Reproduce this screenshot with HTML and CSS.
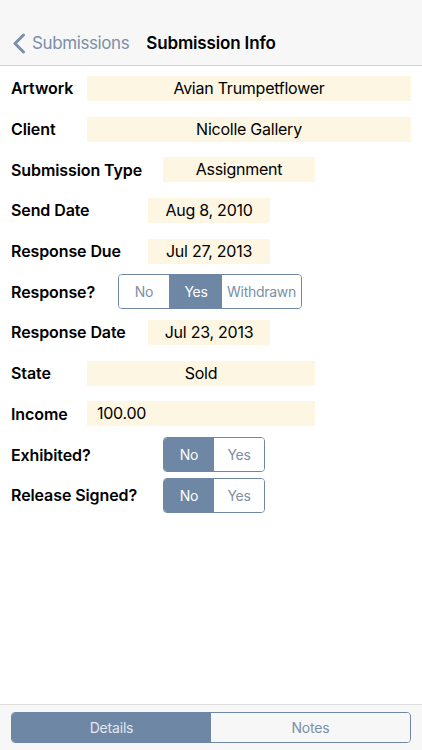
FILE: index.html
```html
<!DOCTYPE html>
<html>
<head>
<meta charset="utf-8">
<link rel="stylesheet" href="styles.css">
</head>
<body>
<div class="app">
  <header class="nav">
    <div class="back">
      <svg class="chev" width="14" height="21" viewBox="0 0 14 21"><path d="M11.5 2 L3 10.5 L11.5 19" fill="none" stroke="#7b8fa9" stroke-width="3" stroke-linecap="round" stroke-linejoin="round"/></svg>
      <span class="back-text">Submissions</span>
    </div>
    <div class="title">Submission Info</div>
  </header>
  <main class="form">
    <div class="row"><span class="label w76">Artwork</span><span class="field f-wide">Avian Trumpetflower</span></div>
    <div class="row"><span class="label w76">Client</span><span class="field f-wide">Nicolle Gallery</span></div>
    <div class="row"><span class="label w152">Submission Type</span><span class="field f-type">Assignment</span></div>
    <div class="row"><span class="label w137">Send Date</span><span class="field f-date">Aug 8, 2010</span></div>
    <div class="row"><span class="label w137">Response Due</span><span class="field f-date">Jul 27, 2013</span></div>
    <div class="row"><span class="label w107">Response?</span>
      <div class="seg seg-resp">
        <span class="opt o-no">No</span><span class="opt o-yes on">Yes</span><span class="opt o-wd">Withdrawn</span>
      </div>
    </div>
    <div class="row"><span class="label w137">Response Date</span><span class="field f-date">Jul 23, 2013</span></div>
    <div class="row"><span class="label w76">State</span><span class="field f-mid">Sold</span></div>
    <div class="row"><span class="label w76">Income</span><span class="field f-mid left">100.00</span></div>
    <div class="row"><span class="label w152">Exhibited?</span>
      <div class="seg seg-yn"><span class="opt on">No</span><span class="opt">Yes</span></div>
    </div>
    <div class="row"><span class="label w152">Release Signed?</span>
      <div class="seg seg-yn"><span class="opt on">No</span><span class="opt">Yes</span></div>
    </div>
  </main>
  <footer class="bottom">
    <div class="tabs"><span class="tab on">Details</span><span class="tab">Notes</span></div>
  </footer>
</div>
</body>
</html>
```
FILE: styles.css
```css
html, body { margin: 0; padding: 0; }
body { background: #fff; font-family: Inter, "Liberation Sans", sans-serif; }
.app { width: 422px; height: 750px; display: flex; flex-direction: column; }
.nav {
  height: 64px; background: #f7f7f7; border-bottom: 1px solid #d4d4d4;
  display: flex; align-items: flex-end; padding-bottom: 1px;
}
.back { display: flex; align-items: center; padding-left: 12px; height: 42px; }
.chev { display: block; margin-right: 6px; margin-top: 1px; }
.back-text { font-size: 17px; color: #7b8fa9; letter-spacing: -0.4px; }
.title { height: 42px; line-height: 42px; margin-left: 17px; font-size: 17px; font-weight: 600; color: #000; letter-spacing: -0.15px; }
.form { flex: 1; padding-top: 2px; }
.row { height: 40.7px; display: flex; align-items: center; padding-left: 11px; }
.label { font-size: 16px; font-weight: 600; color: #000; flex: none; white-space: nowrap; letter-spacing: -0.1px; }
.w76 { width: 76px; }
.w107 { width: 107px; }
.w137 { width: 137px; }
.w152 { width: 152px; }
.field {
  height: 25px; line-height: 25px; background: #fcf6e2; font-size: 16px; color: #000;
  text-align: center; flex: none; box-sizing: border-box; letter-spacing: -0.25px;
}
.field.left { text-align: left; padding-left: 10px; }
.f-wide { width: 324px; }
.f-type { width: 152px; }
.f-date { width: 122px; }
.f-mid { width: 228px; }
.seg {
  height: 35px; display: flex; border: 1px solid #6e87a5; border-radius: 4px;
  box-sizing: border-box; overflow: hidden; flex: none;
}
.opt {
  display: flex; align-items: center; justify-content: center;
  font-size: 14px; color: #7b8fa9; background: #fff; letter-spacing: -0.3px;
}
.opt.on { background: #6e87a5; color: #fff; }
.seg-resp { width: 184px; }
.o-no { width: 50px; border-right: 1px solid #6e87a5; }
.o-yes { width: 52px; }
.o-wd { flex: 1; }
.seg-yn { width: 102px; }
.seg-yn .opt { flex: 1; }
.bottom {
  height: 46px; background: #f7f7f7; border-top: 1px solid #dcdcdc;
  padding: 7px 11px 0; box-sizing: border-box;
}
.tabs {
  height: 31px; display: flex; border: 1px solid #6e87a5; border-radius: 4px;
  box-sizing: border-box; overflow: hidden;
}
.tab {
  flex: 1; display: flex; align-items: center; justify-content: center;
  font-size: 14px; color: #7b8fa9; background: #f7f7f7; letter-spacing: -0.2px;
}
.tab.on { background: #6e87a5; color: #e2e8f0; }
```
